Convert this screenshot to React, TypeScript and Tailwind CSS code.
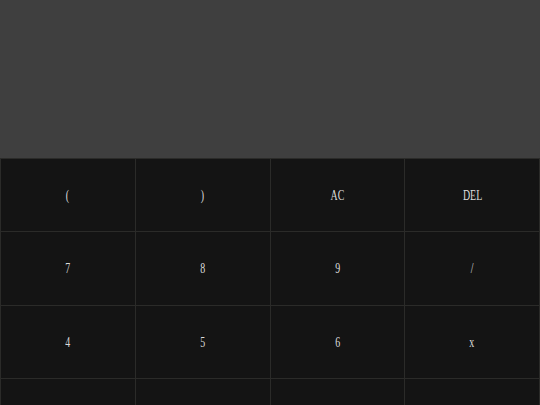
const keys = ["(", ")", "AC", "DEL", "7", "8", "9", "/", "4", "5", "6", "x", "1", "2", "3", "-", "0", ".", "=", "+"]

export default function App() {
  return (
    <div className="w-[540px] bg-[#141414] font-['Liberation_Serif',serif]">
      {/* Display */}
      <div className="h-[158px] bg-[#3f3f3f]" />

      {/* Keypad */}
      <div className="grid grid-cols-4 border-l border-t border-[#2b2b29]">
        {keys.map((k) => (
          <button
            key={k}
            className="flex h-[73.4px] items-center justify-center border-r border-b border-[#2b2b29] bg-[#141414] text-[15px] text-[#dcdcdc]"
          >
            <span className="inline-block scale-x-[0.66]">{k}</span>
          </button>
        ))}
      </div>
    </div>
  )
}
